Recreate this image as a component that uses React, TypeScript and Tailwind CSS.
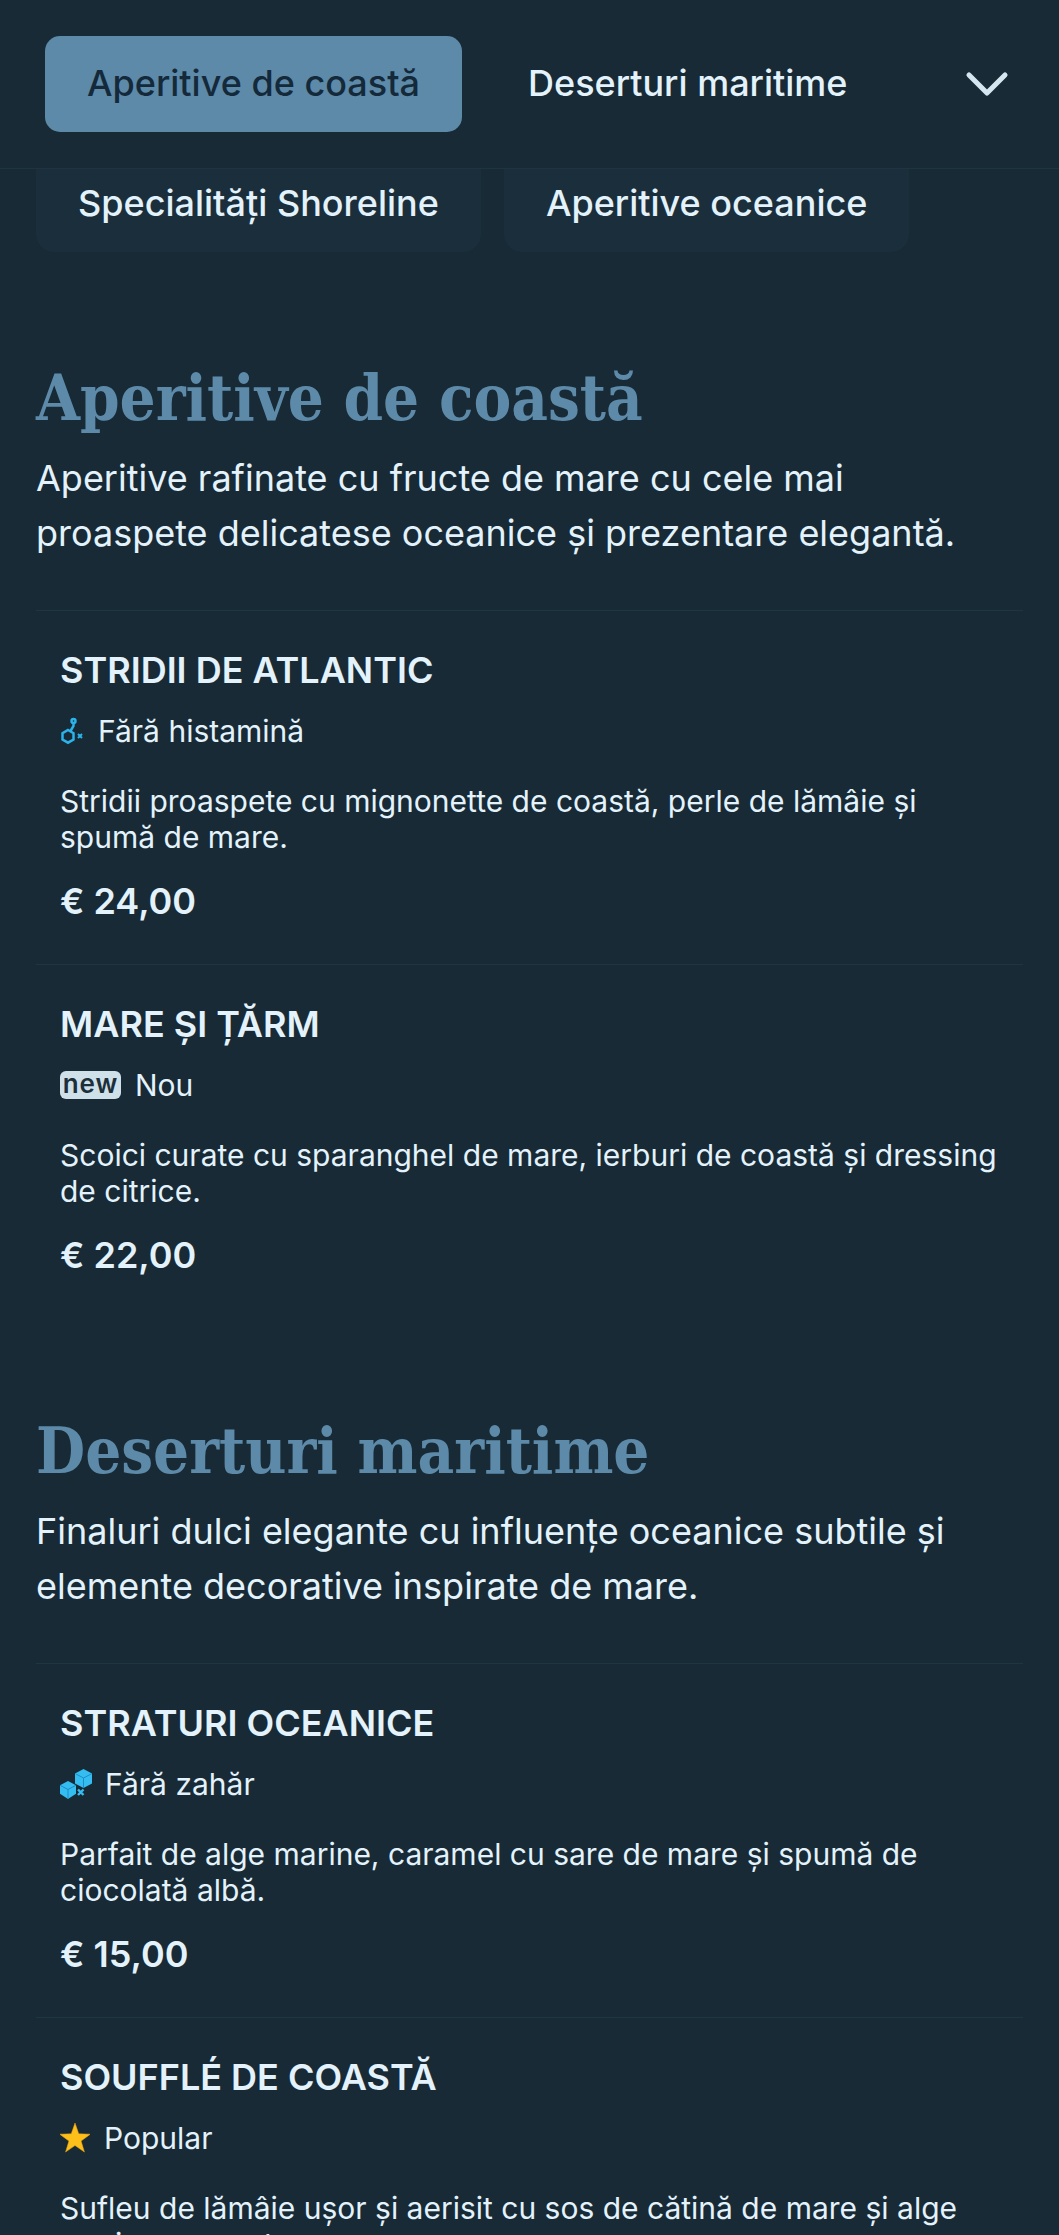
import { ChevronDown } from "lucide-react";
import type { ReactNode } from "react";

const HistamineIcon = () => (
  <svg viewBox="0 0 30 30" className="h-[30px] w-[30px] shrink-0" fill="none" stroke="#2bb3ea" strokeWidth="2.500">
    <path d="m8 14 5.500 3.200v6.300L8 26.700l-5.500-3.200v-6.300z" />
    <path d="m10.500 15 3-5V7" />
    <circle cx="13.500" cy="5" r="2" />
    <path d="m18 18 4 4m0-4-4 4" strokeWidth="2" />
  </svg>
);

const SugarFreeIcon = () => (
  <svg viewBox="0 0 32 30" className="h-[30px] w-[32px] shrink-0">
    <path d="m23.500 0 8.500 4.500v10L23.500 19 15 14.500v-10z" fill="#35bdf2" />
    <path d="m15 4.500 8.500 4.500L32 4.500M23.500 9v10" fill="none" stroke="#1a8ec4" strokeWidth="1" />
    <path d="m8 12 8 4.200v8.600L8 30l-8-5.200v-8.600z" fill="#35bdf2" />
    <path d="m0 16.200 8 4.300 8-4.300M8 20.500V30" fill="none" stroke="#1a8ec4" strokeWidth="1" />
    <path d="m18 20.500 5.500 5.500m0-5.500L18 26" stroke="#35bdf2" strokeWidth="2.400" fill="none" />
  </svg>
);

const StarIcon = () => (
  <svg viewBox="1 1 28 28" className="h-[30px] w-[30px] shrink-0">
    <path
      d="m15 1 3.500 10.100 10.800.3-8.600 6.450 3.100 10.250L15 22l-8.800 6.100 3.100-10.250L.7 11.400l10.800-.3z"
      fill="#fdc01a"
      stroke="#e8a010"
      strokeWidth="0.500"
    />
  </svg>
);

const NewBadge = () => (
  <span className="flex h-[28px] w-[61px] shrink-0 items-center justify-center rounded-[6px] bg-[#cfe0e9] pb-[3px] text-[26px] font-semibold leading-none tracking-[1px] text-[#1c2f3a]">
    new
  </span>
);

interface Dish {
  name: string;
  icon: ReactNode;
  gap: string;
  tag: string;
  description: string;
  price?: string;
}

interface Section {
  title: string;
  intro: string;
  dishes: Dish[];
}

const sections: Section[] = [
  {
    title: "Aperitive de coastă",
    intro: "Aperitive rafinate cu fructe de mare cu cele mai proaspete delicatese oceanice și prezentare elegantă.",
    dishes: [
      {
        name: "STRIDII DE ATLANTIC",
        icon: <HistamineIcon />,
        gap: "gap-[8px]",
        tag: "Fără histamină",
        description: "Stridii proaspete cu mignonette de coastă, perle de lămâie și spumă de mare.",
        price: "€ 24,00",
      },
      {
        name: "MARE ȘI ȚĂRM",
        icon: <NewBadge />,
        gap: "gap-[14px]",
        tag: "Nou",
        description: "Scoici curate cu sparanghel de mare, ierburi de coastă și dressing de citrice.",
        price: "€ 22,00",
      },
    ],
  },
  {
    title: "Deserturi maritime",
    intro: "Finaluri dulci elegante cu influențe oceanice subtile și elemente decorative inspirate de mare.",
    dishes: [
      {
        name: "STRATURI OCEANICE",
        icon: <SugarFreeIcon />,
        gap: "gap-[13px]",
        tag: "Fără zahăr",
        description: "Parfait de alge marine, caramel cu sare de mare și spumă de ciocolată albă.",
        price: "€ 15,00",
      },
      {
        name: "SOUFFLÉ DE COASTĂ",
        icon: <StarIcon />,
        gap: "gap-[14px]",
        tag: "Popular",
        description: "Sufleu de lămâie ușor și aerisit cu sos de cătină de mare și alge marine crocante.",
      },
    ],
  },
];

export default function App() {
  return (
    <div className="h-[2235px] overflow-hidden bg-[#172a36] font-['Inter',sans-serif] text-[#e3f2fb]">
      {/* Top nav */}
      <header className="flex h-[169px] items-center border-b border-[#1e3440] pl-[45px] pr-[36px]">
        <button className="flex h-[96px] w-[417px] items-center justify-center rounded-[15px] bg-[#5d8aa8] pb-[2px] text-[36px] font-medium text-[#14293a]">
          Aperitive de coastă
        </button>
        <button className="ml-[66px] pb-[2px] text-[36px] font-medium">Deserturi maritime</button>
        <ChevronDown className="ml-auto h-[72px] w-[72px] text-[#d5e6f0]" strokeWidth={1.7} />
      </header>

      {/* Categories cut off under the nav */}
      <div className="flex gap-[23px] px-[36px]">
        {["Specialități Shoreline", "Aperitive oceanice"].map((label) => (
          <div
            key={label}
            className="flex h-[83px] items-center rounded-b-[18px] bg-[#1a2f3b] px-[42px] pb-[15px] text-[36px] font-medium"
          >
            {label}
          </div>
        ))}
      </div>

      <main className="px-[36px] pt-[104px]">
        {sections.map((section) => (
          <section key={section.title} className="mb-[91px]">
            <h2 className="font-['DejaVu_Serif_Condensed','DejaVu_Serif',serif] text-[63px] font-bold leading-[84px] text-[#5d8aa8]">
              {section.title}
            </h2>
            <p className="mt-[11px] text-[36px] leading-[54.500px]">{section.intro}</p>
            <div className="mt-[50px]">
              {section.dishes.map((dish) => (
                <article key={dish.name} className="border-t border-[#1f3542] px-[24px] pb-[36px] pt-[32px]">
                  <h3 className="text-[36px] font-semibold leading-[54px]">{dish.name}</h3>
                  <div className={`mt-[18px] flex h-[32px] items-center ${dish.gap} text-[30px]`}>
                    {dish.icon}
                    <span>{dish.tag}</span>
                  </div>
                  <p className="mt-[36px] text-[30px] leading-[36px]">{dish.description}</p>
                  {dish.price && <p className="mt-[19px] text-[36px] font-semibold leading-[54px]">{dish.price}</p>}
                </article>
              ))}
            </div>
          </section>
        ))}
      </main>
    </div>
  );
}
